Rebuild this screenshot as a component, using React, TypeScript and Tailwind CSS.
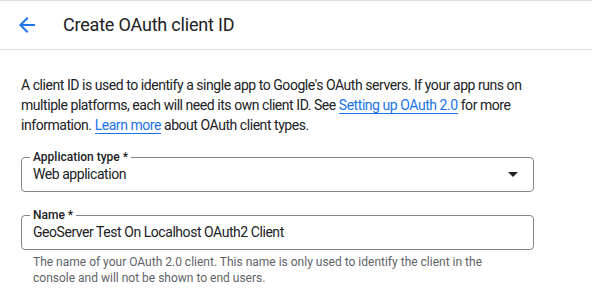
import React from 'react';

function BackArrow() {
  return (
    <svg viewBox="0 0 24 24" className="h-6 w-6" fill="#1a73e8">
      <path d="M20 11H7.83l5.59-5.59L12 4l-8 8 8 8 1.41-1.41L7.83 13H20v-2z" />
    </svg>
  );
}

function OutlinedField({
  label,
  value,
  dropdown,
}: {
  label: string;
  value: string;
  dropdown?: boolean;
}) {
  return (
    <fieldset className="h-[42px] rounded-[4px] border border-[#80868b] pl-[11px] pr-[15px]">
      <legend className="-ml-[3px] px-[3px] text-[12px] leading-[14px] font-medium text-[#202124]">
        {label}
      </legend>
      <div className="flex items-center justify-between">
        <span className="text-[14px] leading-[20px] tracking-[-0.45px] text-[#202124]">{value}</span>
        {dropdown && (
          <svg viewBox="0 0 10 5" className="h-[5px] w-[10px]" fill="#202124">
            <path d="M0 0l5 5 5-5z" />
          </svg>
        )}
      </div>
    </fieldset>
  );
}

export default function App() {
  return (
    <div className="min-h-[303px] w-[592px] bg-white font-['Roboto',sans-serif] text-[#202124]">
      {/* Header */}
      <div className="flex h-[50px] items-center border-y border-[#dadce0] pl-[15px]">
        <BackArrow />
        <h1 className="ml-[24px] text-[18px] leading-[24px] font-normal tracking-[-0.2px]">
          Create OAuth client ID
        </h1>
      </div>

      {/* Body */}
      <div className="pl-[21px] pt-[25px]">
        <p className="w-[545px] text-[14px] leading-[20px] tracking-[-0.45px]">
          A client ID is used to identify a single app to Google's OAuth servers. If your app runs on
          multiple platforms, each will need its own client ID. See{' '}
          <a className="border-b border-[#1a73e8] text-[#1a73e8]">Setting up OAuth 2.0</a> for more
          information. <a className="border-b border-[#1a73e8] text-[#1a73e8]">Learn more</a> about
          OAuth client types.
        </p>

        <div className="w-[513px]">
          <div className="mt-[15px]">
            <OutlinedField label="Application type *" value="Web application" dropdown />
          </div>

          <div className="mt-[16px]">
            <OutlinedField label="Name *" value="GeoServer Test On Localhost OAuth2 Client" />
          </div>

          <p className="mt-[4px] pl-[12px] pr-[30px] text-[12px] leading-[16px] text-[#5f6368]">
            The name of your OAuth 2.0 client. This name is only used to identify the client in the
            console and will not be shown to end users.
          </p>
        </div>
      </div>
    </div>
  );
}
